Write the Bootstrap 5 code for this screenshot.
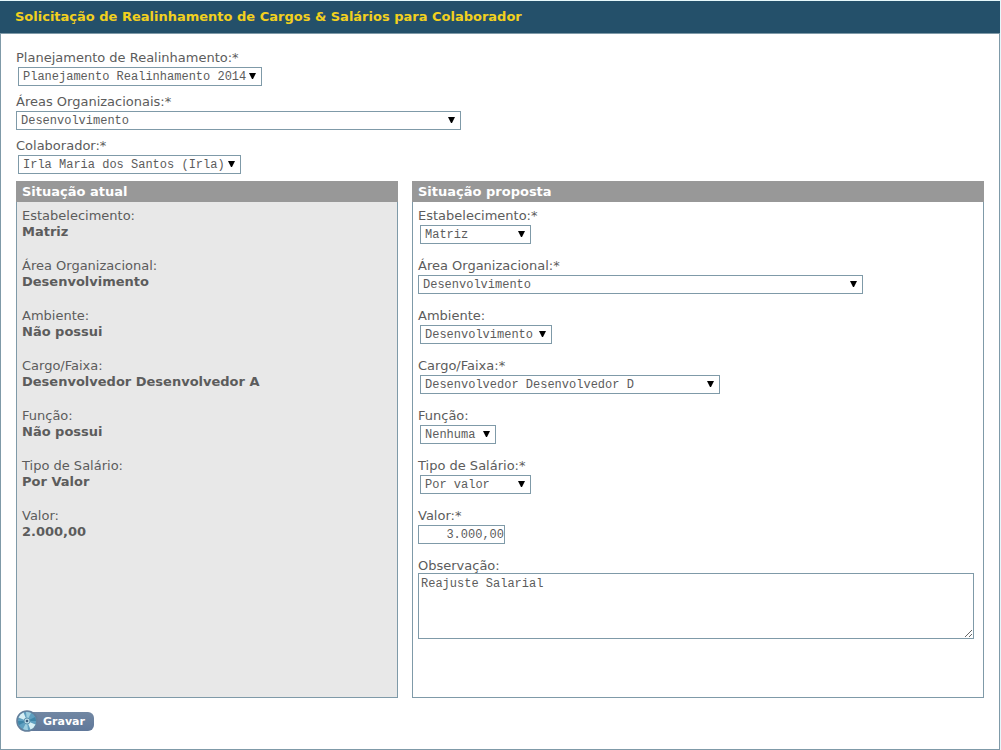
<!DOCTYPE html>
<html lang="pt-BR">
<head>
<meta charset="utf-8">
<meta name="viewport" content="width=device-width, initial-scale=1">
<title>Solicitação de Realinhamento</title>
<link href="https://cdn.jsdelivr.net/npm/bootstrap@5.3.0/dist/css/bootstrap.min.css" rel="stylesheet">
<style>
  :root { --line: #7f9aa8; }
  body { font: 13px/16px "DejaVu Sans", Verdana, sans-serif; color: #5c5c5c; background: #e6f8fb; padding: 1px 1px 0 0; }
  .window { background: #fff; border: 1px solid var(--line); border-top: 0; min-height: calc(100vh - 1px); }
  .window-title { background: #24506a; color: #f2d01e; font-size: 13px; line-height: 16px; padding: 8px 15px; margin: 0 -1px; border-bottom: 1px solid var(--line); }
  .window-body { padding: 16px 15px; }
  .form-label { margin-bottom: 1px; }
  .form-select, .form-control { font: 12px/17px "Liberation Mono", "Courier New", monospace; color: #5c5c5c; border: 1px solid var(--line); border-radius: 0; min-height: 0; max-width: 100%; }
  .form-select { height: 19px; padding: 1px 0 0 4px; line-height: 16px; margin: 0 2px;
    background: #fff url("data:image/svg+xml,%3Csvg xmlns='http://www.w3.org/2000/svg' viewBox='0 0 7 6'%3E%3Cpath d='M0 0h7L4 6H3z'/%3E%3C/svg%3E") no-repeat right 5px top 5px / 7px 6px; }
  .form-select.flush { margin: 0; }
  .w-plan { width: 244px; } .w-area { width: 445px; } .w-person { width: 223px; }
  .w-short { width: 111px; } .w-env { width: 132px; } .w-role { width: 300px; } .w-mini { width: 76px; }
  .top-fields { display: grid; row-gap: 8px; margin-bottom: 7px; }
  .panels { gap: 14px; }
  .panel { border: 1px solid var(--line); min-height: 517px; min-width: 0; }
  .panel h2 { background: #989898; color: #fff; font-size: 13px; line-height: 21px; padding: 0 5px; margin: -1px -1px 0; border-left: 1px solid #989898; }
  .panel-current { flex: 2 1 0; background: #e8e8e8; }
  .panel-new { flex: 3 1 0; }
  .panel-body { padding: 6px 5px; }
  .pair { height: 50px; }
  .value-input { width: 87px; height: 19px; padding: 1px 0 0; text-align: right; }
  .note { height: 66px; margin-top: -1px; padding: 2px; line-height: 16px; width: calc(100% - 4px); resize: both; }
  .btn-save { height: 22px; font: bold 11px/19px "DejaVu Sans", Verdana, sans-serif; color: #fff; padding: 0; border: 0; margin-top: 12px; }
  .btn-save span { height: 19px; margin-left: -12px; padding: 0 9px 0 17px; border-radius: 0 6px 6px 0; background: linear-gradient(#7187a3, #60789a); }
  .btn-save:hover { color: #fff; }
  .btn-save svg { position: relative; z-index: 1; }
</style>
</head>
<body>
<main class="window">
  <h1 class="window-title fw-bold">Solicitação de Realinhamento de Cargos &amp; Salários para Colaborador</h1>
  <form class="window-body">
    <div class="top-fields">
      <div>
        <label class="form-label d-block" for="plan">Planejamento de Realinhamento:*</label>
        <select class="form-select w-plan" id="plan"><option>Planejamento Realinhamento 2014</option></select>
      </div>
      <div>
        <label class="form-label d-block" for="areas">Áreas Organizacionais:*</label>
        <select class="form-select flush w-area" id="areas"><option>Desenvolvimento</option></select>
      </div>
      <div>
        <label class="form-label d-block" for="person">Colaborador:*</label>
        <select class="form-select w-person" id="person"><option>Irla Maria dos Santos (Irla)</option></select>
      </div>
    </div>

    <div class="panels d-flex">
      <section class="panel panel-current">
        <h2 class="fw-bold">Situação atual</h2>
        <dl class="panel-body m-0">
          <div class="pair"><dt class="fw-normal">Estabelecimento:</dt><dd class="fw-bold m-0">Matriz</dd></div>
          <div class="pair"><dt class="fw-normal">Área Organizacional:</dt><dd class="fw-bold m-0">Desenvolvimento</dd></div>
          <div class="pair"><dt class="fw-normal">Ambiente:</dt><dd class="fw-bold m-0">Não possui</dd></div>
          <div class="pair"><dt class="fw-normal">Cargo/Faixa:</dt><dd class="fw-bold m-0">Desenvolvedor Desenvolvedor A</dd></div>
          <div class="pair"><dt class="fw-normal">Função:</dt><dd class="fw-bold m-0">Não possui</dd></div>
          <div class="pair"><dt class="fw-normal">Tipo de Salário:</dt><dd class="fw-bold m-0">Por Valor</dd></div>
          <div class="pair"><dt class="fw-normal">Valor:</dt><dd class="fw-bold m-0">2.000,00</dd></div>
        </dl>
      </section>

      <section class="panel panel-new">
        <h2 class="fw-bold">Situação proposta</h2>
        <div class="panel-body">
          <div class="pair"><label class="form-label d-block" for="site">Estabelecimento:*</label>
            <select class="form-select w-short" id="site"><option>Matriz</option></select></div>
          <div class="pair"><label class="form-label d-block" for="area">Área Organizacional:*</label>
            <select class="form-select flush w-area" id="area"><option>Desenvolvimento</option></select></div>
          <div class="pair"><label class="form-label d-block" for="env">Ambiente:</label>
            <select class="form-select w-env" id="env"><option>Desenvolvimento</option></select></div>
          <div class="pair"><label class="form-label d-block" for="role">Cargo/Faixa:*</label>
            <select class="form-select w-role" id="role"><option>Desenvolvedor Desenvolvedor D</option></select></div>
          <div class="pair"><label class="form-label d-block" for="duty">Função:</label>
            <select class="form-select w-mini" id="duty"><option>Nenhuma</option></select></div>
          <div class="pair"><label class="form-label d-block" for="kind">Tipo de Salário:*</label>
            <select class="form-select w-short" id="kind"><option>Por valor</option></select></div>
          <div class="pair"><label class="form-label d-block" for="amount">Valor:*</label>
            <input class="form-control value-input" type="text" id="amount" value="3.000,00"></div>
          <label class="form-label d-block mb-0" for="note">Observação:</label>
          <textarea class="form-control note" id="note">Reajuste Salarial</textarea>
        </div>
      </section>
    </div>

    <button type="button" class="btn btn-save d-flex align-items-center">
      <svg width="22" height="22" viewBox="0 0 22 22" aria-hidden="true">
        <circle cx="11" cy="11" r="10" fill="#5f9fc0" stroke="#647f9b" stroke-width="1.6"/>
        <path d="M11 11 2.5 7.5A9 9 0 0 1 7.500 2.500zM11 11l8.500 3.500a9 9 0 0 1-5 5z" fill="#d7eff5"/>
        <path d="M11 11 10 2a9 9 0 0 1 5 1zM11 11l1 9a9 9 0 0 1-5-1z" fill="#9fcfe0"/>
        <path d="M11 11l8-4a9 9 0 0 1 1 4zM11 11l-8 4a9 9 0 0 1-1-4z" fill="#3f86a8"/>
        <circle cx="11" cy="11" r="3" fill="#b9dce8" stroke="#6195b0"/>
        <circle cx="11" cy="11" r="1.3" fill="#3d5f80"/>
      </svg>
      <span>Gravar</span>
    </button>
  </form>
</main>
<script src="https://cdn.jsdelivr.net/npm/bootstrap@5.3.0/dist/js/bootstrap.bundle.min.js"></script>
</body>
</html>
